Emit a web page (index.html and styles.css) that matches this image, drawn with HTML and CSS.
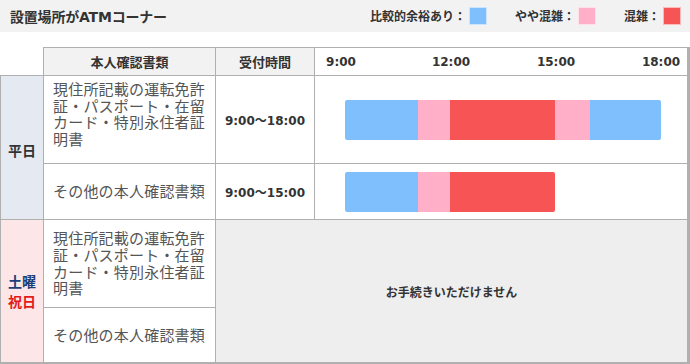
FILE: index.html
```html
<!DOCTYPE html>
<html lang="ja">
<head>
<meta charset="utf-8">
<title>設置場所がATMコーナー</title>
<link rel="stylesheet" href="styles.css">
</head>
<body>
<div class="topbar">
  <h1 class="title">設置場所がATMコーナー</h1>
  <ul class="legend">
    <li class="legend-item">比較的余裕あり：<span class="swatch free"></span></li>
    <li class="legend-item">やや混雑：<span class="swatch busy"></span></li>
    <li class="legend-item">混雑：<span class="swatch crowded"></span></li>
  </ul>
</div>
<div class="schedule">
  <div class="cell corner"></div>
  <div class="cell head">本人確認書類</div>
  <div class="cell head">受付時間</div>
  <div class="cell head head-chart">
    <div class="ticks">
      <span class="tick">9:00</span>
      <span class="tick">12:00</span>
      <span class="tick">15:00</span>
      <span class="tick">18:00</span>
    </div>
  </div>

  <div class="cell day weekday">平日</div>
  <div class="cell doc doc-top">現住所記載の運転免許証・パスポート・在留カード・特別永住者証明書</div>
  <div class="cell time">9:00〜18:00</div>
  <div class="cell chart">
    <div class="bar">
      <span class="seg free" style="width:73px"></span>
      <span class="seg busy" style="width:32px"></span>
      <span class="seg crowded" style="width:105px"></span>
      <span class="seg busy" style="width:35px"></span>
      <span class="seg free" style="width:71px"></span>
    </div>
  </div>

  <div class="cell doc">その他の本人確認書類</div>
  <div class="cell time">9:00〜15:00</div>
  <div class="cell chart">
    <div class="bar">
      <span class="seg free" style="width:73px"></span>
      <span class="seg busy" style="width:32px"></span>
      <span class="seg crowded" style="width:105px"></span>
    </div>
  </div>

  <div class="cell day holiday"><span class="sat">土曜</span><span class="hol">祝日</span></div>
  <div class="cell doc">現住所記載の運転免許証・パスポート・在留カード・特別永住者証明書</div>
  <div class="cell closed">お手続きいただけません</div>
  <div class="cell doc last">その他の本人確認書類</div>
</div>
</body>
</html>
```
FILE: styles.css
```css
* { box-sizing: border-box; }

body {
  margin: 0;
  background: #fff;
  color: #333;
  font-family: "Noto Sans CJK JP", sans-serif;
}

.topbar {
  height: 32px;
  background: #f2f2f2;
  display: flex;
  align-items: center;
  justify-content: space-between;
  padding: 0 9px 0 10px;
}

.title {
  margin: 0;
  font-family: "DejaVu Sans", "Noto Sans CJK JP", sans-serif;
  font-size: 14px;
  font-weight: bold;
  color: #333;
  letter-spacing: -0.2px;
}

.legend {
  margin: 0;
  padding: 0;
  list-style: none;
  display: flex;
  gap: 28px;
}

.legend-item {
  display: flex;
  align-items: center;
  font-size: 12px;
  font-weight: bold;
  line-height: 18px;
  color: #333;
}

.swatch {
  width: 18px;
  height: 18px;
  margin-left: 3px;
  border: 1px solid rgba(255, 255, 255, 0.6);
}

.free { background: #80bffe; }
.busy { background: #ffb0c8; }
.crowded { background: #f75555; }

.schedule {
  margin-top: 15px;
  display: grid;
  grid-template-columns: 44px 172px 99px 375px;
  grid-template-rows: 29px 88px 56px 88px 56px;
}

.cell {
  border-right: 1px solid #b0b0b0;
  border-bottom: 1px solid #b0b0b0;
  display: flex;
  align-items: center;
  justify-content: center;
}

.corner { background: #fff; }

.head {
  border-top: 1px solid #b0b0b0;
  background: #f2f2f2;
  font-size: 13px;
  font-weight: bold;
  color: #333;
}

.head-chart,
.chart {
  background: #fff;
  border-right-width: 3px;
  justify-content: flex-start;
}

.ticks {
  display: grid;
  grid-template-columns: 110px 105px 105px 0;
  padding-left: 26px;
}

.tick {
  width: 0;
  display: flex;
  justify-content: center;
  white-space: nowrap;
  font-family: "DejaVu Sans", "Noto Sans CJK JP", sans-serif;
  font-size: 12px;
  font-weight: bold;
  color: #333;
}

.day {
  grid-row: span 2;
  border-left: 1px solid #b0b0b0;
  flex-direction: column;
  font-size: 14px;
  font-weight: bold;
  line-height: 20.5px;
}

.weekday {
  background: #e5eaf2;
  color: #333;
  padding-top: 5px;
}

.holiday {
  background: #fde6e8;
  border-bottom-width: 2px;
}

.sat { color: #1b3f7a; }
.hol { color: #e21a1a; }

.doc {
  background: #fff;
  justify-content: flex-start;
  padding: 0 8px 0 9px;
  font-size: 15px;
  line-height: 16.7px;
  letter-spacing: 0.2px;
  color: #555;
}

.doc-top {
  align-items: flex-start;
  padding-top: 5px;
}

.doc.last { border-bottom-width: 2px; }

.time {
  background: #fff;
  font-family: "DejaVu Sans", "Noto Sans CJK JP", sans-serif;
  font-size: 12px;
  font-weight: bold;
  color: #333;
}

.bar {
  display: flex;
  height: 40px;
  margin-left: 30px;
  border-radius: 2px;
  overflow: hidden;
}

.seg { display: block; height: 100%; }

.closed {
  grid-column: 3 / span 2;
  grid-row: span 2;
  background: #eeeeee;
  border-right-width: 3px;
  border-bottom-width: 2px;
  font-size: 12px;
  font-weight: bold;
  color: #333;
}
```
